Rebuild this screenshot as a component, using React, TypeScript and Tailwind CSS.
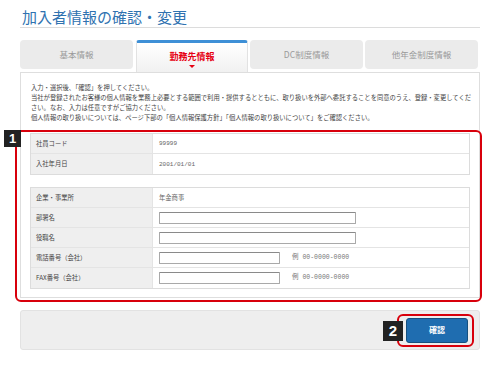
import React from "react";

const font = { fontFamily: '"Noto Sans CJK JP", "Noto Sans", sans-serif' };

function Tab({ label, active }: { label: string; active?: boolean }) {
  if (active) {
    return (
      <div className="relative w-[112px] h-[32px] border-t-[3px] border-t-[#3d8fd6] border-x border-x-[#e2e2e2] bg-gradient-to-b from-white to-[#f1f1f1] rounded-t-[3px] flex flex-col items-center pt-[8px]">
        <span className="text-[9px] leading-[11px] font-bold text-[#e60012]">{label}</span>
        <span className="mt-[3px] w-0 h-0 border-l-[3px] border-r-[3px] border-t-[3px] border-l-transparent border-r-transparent border-t-[#e60012]" />
      </div>
    );
  }
  return (
    <div className="w-[113px] h-[29px] bg-[#ebebeb] rounded-[4px] flex items-center justify-center">
      <span className="text-[8.5px] text-[#9a9a9a]">{label}</span>
    </div>
  );
}

function Row({
  label,
  children,
  last,
}: {
  label: string;
  children?: React.ReactNode;
  last?: boolean;
}) {
  return (
    <div className={`flex h-[20px] ${last ? "" : "border-b border-[#e4e4e4]"}`}>
      <div className="w-[122px] bg-[#efefef] flex items-center pl-[5px] text-[6.3px] text-[#444] border-r border-[#e4e4e4]">
        {label}
      </div>
      <div className="flex-1 flex items-center pl-[6px] text-[6.3px] text-[#666]">{children}</div>
    </div>
  );
}

function Input({ w }: { w: number }) {
  return (
    <div
      className="h-[12px] border border-[#a9a9a9] border-t-[#8a8a8a] bg-white rounded-[1px]"
      style={{ width: w }}
    />
  );
}

function Example() {
  return (
    <span className="ml-[12px] text-[6.5px] text-[#777]" style={{ fontFamily: '"Liberation Mono", "Noto Sans CJK JP", monospace' }}>
      例 00-0000-0000
    </span>
  );
}

export default function App() {
  return (
    <div className="relative w-[500px] h-[366px] bg-white px-[20px]" style={font}>
      <div className="pt-[7px] pl-[2px] pb-[1px] text-[15px] leading-[19px] text-[#2f72b0] border-b border-[#dcdcdc]">
        加入者情報の確認・変更
      </div>

      <div className="mt-[12px] flex items-start">
        <Tab label="基本情報" />
        <div className="ml-[3px]">
          <Tab label="勤務先情報" active />
        </div>
        <div className="ml-[2px]">
          <Tab label="DC制度情報" />
        </div>
        <div className="ml-[2px]">
          <Tab label="他年金制度情報" />
        </div>
      </div>

      <div className="border border-[#dedede] bg-white pt-[10px] px-[9px] pb-[8px]">
        <div className="text-[6.3px] leading-[10px] text-[#444] whitespace-nowrap pl-[1px]">
          <div>入力・選択後、「確認」を押してください。</div>
          <div>当社が登録されたお客様の個人情報を業務上必要とする範囲で利用・提供するとともに、取り扱いを外部へ委託することを同意のうえ、登録・変更してくだ</div>
          <div>さい。なお、入力は任意ですがご協力ください。</div>
          <div>個人情報の取り扱いについては、ページ下部の「個人情報保護方針」「個人情報の取り扱いについて」をご確認ください。</div>
        </div>

        <div className="mt-[10px] border border-[#dcdcdc]">
          <Row label="社員コード">
            <span style={{ fontFamily: '"Liberation Mono", monospace' }} className="text-[6px]">99999</span>
          </Row>
          <Row label="入社年月日" last>
            <span style={{ fontFamily: '"Liberation Mono", monospace' }} className="text-[6px]">2001/01/01</span>
          </Row>
        </div>

        <div className="mt-[12px] border border-[#dcdcdc]">
          <Row label="企業・事業所">年金商事</Row>
          <Row label="部署名">
            <Input w={197} />
          </Row>
          <Row label="役職名">
            <Input w={197} />
          </Row>
          <Row label="電話番号（会社）">
            <Input w={121} />
            <Example />
          </Row>
          <Row label="FAX番号（会社）" last>
            <Input w={121} />
            <Example />
          </Row>
        </div>
      </div>

      <div className="mt-[12px] h-[40px] bg-[#eeeeee] border border-[#e2e2e2] rounded-[3px] flex items-center justify-end pr-[11px]">
        <button className="w-[62px] h-[25px] bg-[#1f6db0] border border-[#15507f] rounded-[3px] text-white text-[8px] font-bold">
          確認
        </button>
      </div>

      {/* annotation 1 */}
      <div className="absolute left-[15px] top-[130px] w-[467px] h-[172px] border-2 border-[#d8000c] rounded-[6px] pointer-events-none" />
      <div className="absolute left-[4px] top-[130px] w-[17px] h-[17px] bg-[#222] text-white text-[13px] leading-[17px] font-bold flex items-center justify-center" style={{ fontFamily: '"Liberation Sans", sans-serif' }}>
        1
      </div>

      {/* annotation 2 */}
      <div className="absolute left-[397px] top-[314px] w-[77px] h-[33px] border-2 border-[#d8000c] rounded-[6px] pointer-events-none" />
      <div className="absolute left-[383px] top-[321px] w-[20px] h-[20px] bg-[#222] text-white text-[15px] leading-[20px] font-bold flex items-center justify-center" style={{ fontFamily: '"Liberation Sans", sans-serif' }}>
        2
      </div>
    </div>
  );
}
